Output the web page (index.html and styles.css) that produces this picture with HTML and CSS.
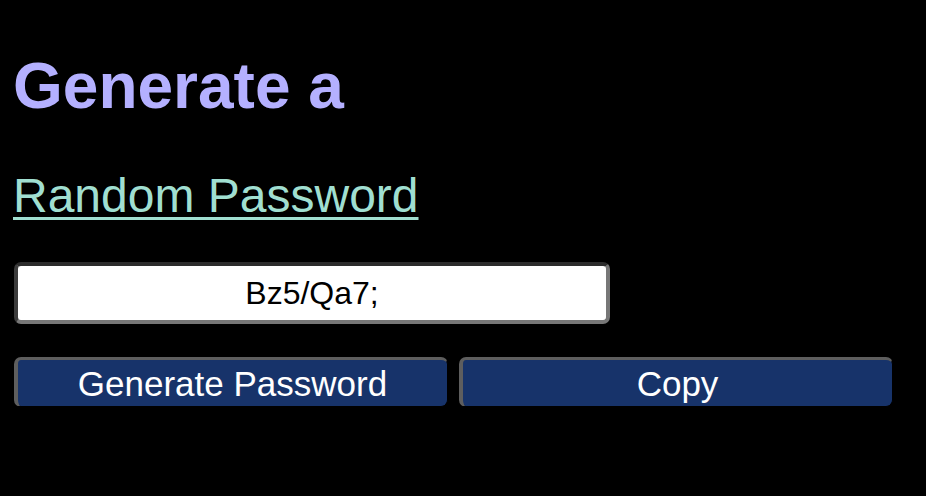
FILE: index.html
```html
<!DOCTYPE html>
<html lang="en">
<head>
<meta charset="utf-8">
<title>Password Generator</title>
<link rel="stylesheet" href="styles.css">
</head>
<body>
<main class="page">
  <h1 class="title">Generate a</h1>
  <a class="subtitle" href="#">Random Password</a>
  <input class="password" type="text" value="Bz5/Qa7;" readonly>
  <div class="actions">
    <button class="btn" type="button">Generate Password</button>
    <button class="btn" type="button">Copy</button>
  </div>
</main>
</body>
</html>
```

FILE: styles.css
```css
html, body {
  margin: 0;
  padding: 0;
  background: #000;
}

body {
  font-family: "Liberation Sans", Arial, Helvetica, sans-serif;
}

.page {
  display: flex;
  flex-direction: column;
  align-items: flex-start;
  padding: 49px 0 0 13px;
}

.title {
  margin: 0;
  font-size: 64px;
  font-weight: bold;
  line-height: normal;
  color: #b4b0ff;
}

.subtitle {
  margin-top: 45px;
  font-size: 48px;
  line-height: normal;
  color: #a0dfd1;
  text-decoration: underline;
  text-decoration-thickness: 3px;
  text-underline-offset: 5px;
}

.password {
  box-sizing: border-box;
  margin: 39px 0 0 1px;
  width: 596px;
  height: 62px;
  padding: 0 8px;
  background: #fff;
  color: #000;
  font-family: "Liberation Sans", Arial, Helvetica, sans-serif;
  font-size: 32px;
  text-align: center;
  border-style: solid;
  border-width: 4px;
  border-color: #2c2c2c #777 #777 #3c3c3c;
  border-radius: 7px;
  outline: none;
}

.actions {
  display: flex;
  gap: 11px;
  margin: 33px 0 0 1px;
}

.btn {
  box-sizing: border-box;
  width: 434px;
  height: 50px;
  padding: 0;
  background: #17336a;
  color: #fff;
  font-family: "Liberation Sans", Arial, Helvetica, sans-serif;
  font-size: 35px;
  line-height: 1;
  border-style: solid;
  border-width: 3px 1px 1px 4px;
  border-color: #5e5e5e #000 #000 #5e5e5e;
  border-radius: 7px;
}
```
